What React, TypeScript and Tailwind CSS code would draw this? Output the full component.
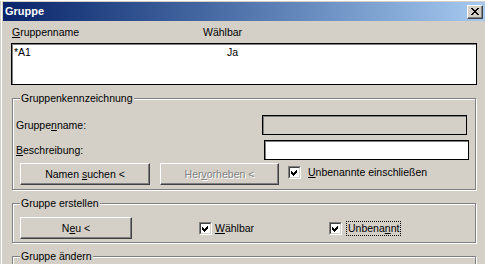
import React from "react";

const Check = () => (
  <svg width="9" height="9" viewBox="0 0 9 9" shapeRendering="crispEdges">
    <polygon points="1,3 3,5 7,1 7,4 3,8 1,6" fill="#000" />
  </svg>
);

function CheckBox() {
  return (
    <div className="w-[13px] h-[13px] shrink-0 border border-t-[#808080] border-l-[#808080] border-r-white border-b-white">
      <div className="w-full h-full bg-white border border-t-[#404040] border-l-[#404040] border-r-[#d4d0c8] border-b-[#d4d0c8] flex items-center justify-center">
        <Check />
      </div>
    </div>
  );
}

function CloseGlyph() {
  const rects: [number, number, number][] = [
    [0, 0, 2], [6, 0, 2],
    [1, 1, 2], [5, 1, 2],
    [2, 2, 4],
    [3, 3, 2],
    [2, 4, 4],
    [1, 5, 2], [5, 5, 2],
    [0, 6, 2], [6, 6, 2],
  ];
  return (
    <svg width="8" height="7" viewBox="0 0 8 7" shapeRendering="crispEdges">
      {rects.map(([x, y, w], i) => (
        <rect key={i} x={x} y={y} width={w} height={1} fill="#000" />
      ))}
    </svg>
  );
}

function Btn({
  w,
  disabled,
  children,
}: {
  w: string;
  disabled?: boolean;
  children: React.ReactNode;
}) {
  return (
    <button
      type="button"
      className={
        "h-[22px] shrink-0 bg-[#d4d0c8] border border-t-white border-l-white border-r-[#404040] border-b-[#404040] shadow-[inset_-1px_-1px_0_#808080] flex items-center justify-center leading-[13px] " +
        w +
        (disabled
          ? " text-[#808080] [text-shadow:1px_1px_0_#ffffff]"
          : " text-black")
      }
    >
      {children}
    </button>
  );
}

export default function App() {
  return (
    <div className="w-[485px] h-[264px] overflow-hidden bg-[#d4d0c8] border-t border-white font-['Liberation_Sans',Arial,sans-serif] text-[10.5px] leading-[13px] text-black">
      <div className="ml-[1px] border-l border-white pl-[1px] pt-[1px]">
        {/* Title bar */}
        <div className="h-[19px] bg-gradient-to-r from-[#0a246a] to-[#a6caf0] flex items-center justify-between pl-[2px] pr-[2px]">
          <span className="text-white font-bold text-[11px] leading-[13px]">Gruppe</span>
          <div className="w-[16px] h-[14px] bg-[#d4d0c8] border border-t-white border-l-white border-r-[#404040] border-b-[#404040] shadow-[inset_-1px_-1px_0_#808080] flex items-center justify-center">
            <CloseGlyph />
          </div>
        </div>

        <div className="pl-[8px]">
          {/* Header */}
          <div className="mt-[5px] h-[13px] flex pl-[1px]">
            <span className="w-[191px] shrink-0">
              <u>G</u>ruppenname
            </span>
            <span>Wählbar</span>
          </div>

          {/* List box */}
          <div className="mt-[4px] w-[466px] h-[42px] bg-white border border-black shadow-[inset_1px_1px_0_#808080]">
            <div className="flex pl-[2px] pt-[2px]">
              <span className="w-[213px] shrink-0">*A1</span>
              <span>Ja</span>
            </div>
          </div>

          {/* Gruppenkennzeichnung */}
          <fieldset className="mt-[7px] ml-[1px] w-[464px] border border-[#808080] shadow-[1px_1px_0_#ffffff,inset_1px_1px_0_#ffffff]">
            <legend className="ml-[7px] px-[1px] bg-[#d4d0c8] leading-[13px]">Gruppenkennzeichnung</legend>
            <div className="pl-[3px] pt-[10px] pb-[4px] flex flex-col">
              <div className="h-[20px] flex items-center">
                <span className="w-[246px] shrink-0">
                  Gruppe<u>n</u>name:
                </span>
                <div className="w-[205px] h-[20px] bg-[#d4d0c8] border border-black shadow-[inset_1px_1px_0_#808080]" />
              </div>
              <div className="mt-[5px] h-[20px] flex items-center">
                <span className="w-[248px] shrink-0">
                  <u>B</u>eschreibung:
                </span>
                <div className="w-[205px] h-[20px] bg-white border border-black shadow-[inset_1px_1px_0_#808080]" />
              </div>
              <div className="mt-[3px] h-[22px] flex items-start">
                <div className="ml-[4px]">
                  <Btn w="w-[130px]">
                    <span>
                      Namen <u>s</u>uchen &lt;
                    </span>
                  </Btn>
                </div>
                <div className="ml-[10px]">
                  <Btn w="w-[119px]" disabled>
                    <span>
                      Her<u>v</u>orheben &lt;
                    </span>
                  </Btn>
                </div>
                <div className="ml-[9px] mt-[3px]">
                  <CheckBox />
                </div>
                <span className="ml-[7px] mt-[3px]">
                  <u>U</u>nbenannte einschließen
                </span>
              </div>
            </div>
          </fieldset>

          {/* Gruppe erstellen */}
          <fieldset className="mt-[7px] ml-[1px] w-[464px] border border-[#808080] shadow-[1px_1px_0_#ffffff,inset_1px_1px_0_#ffffff]">
            <legend className="ml-[7px] px-[1px] bg-[#d4d0c8] leading-[13px]">Gruppe erstellen</legend>
            <div className="pl-[3px] pt-[7px] pb-[3px] flex items-center h-[32px]">
              <div className="ml-[4px]">
                <Btn w="w-[112px]">
                  <span>
                    N<u>e</u>u &lt;
                  </span>
                </Btn>
              </div>
              <div className="ml-[67px] w-[130px] shrink-0 flex items-center">
                <CheckBox />
                <span className="ml-[3px]">
                  <u>W</u>ählbar
                </span>
              </div>
              <CheckBox />
              <span className="ml-[4px] px-[1px] border border-dotted border-black leading-[13px]">
                Unbena<u>n</u>nt
              </span>
            </div>
          </fieldset>

          {/* Gruppe ändern */}
          <fieldset className="mt-[7px] ml-[1px] w-[464px] h-[40px] border border-[#808080] shadow-[1px_1px_0_#ffffff,inset_1px_1px_0_#ffffff]">
            <legend className="ml-[7px] px-[1px] bg-[#d4d0c8] leading-[13px]">Gruppe ändern</legend>
          </fieldset>
        </div>
      </div>
    </div>
  );
}
